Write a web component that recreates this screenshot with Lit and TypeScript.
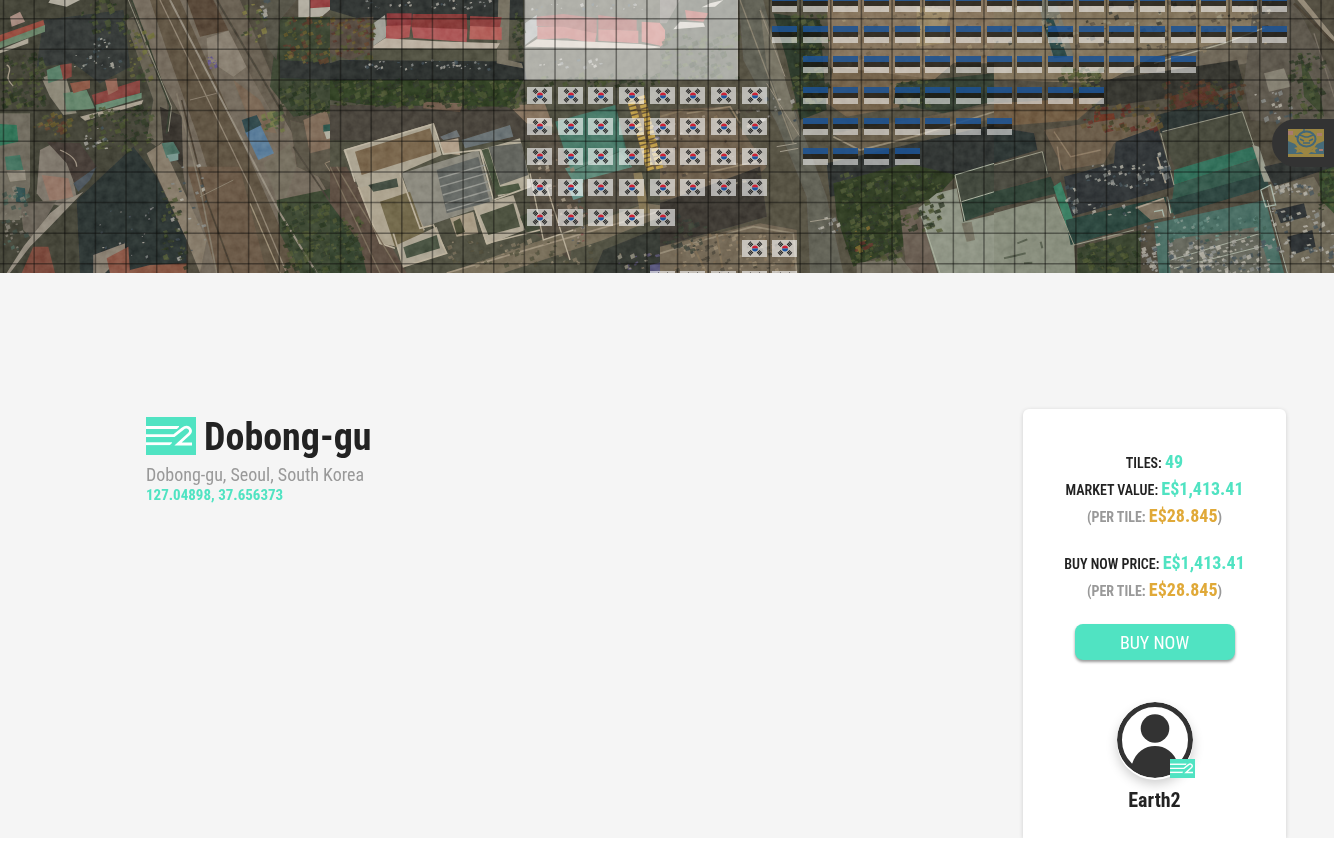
import { LitElement, html, svg, css } from "lit";
import { customElement } from "lit/decorators.js";

type Shape = [string, string];
type Spread = [number, number, number, number, number, number, string];

const STEP = 30.64;
const COLS = Array.from({ length: 44 }, (_, i) => 3.5 + i * STEP);
const ROWS = Array.from({ length: 9 }, (_, i) => 18.7 + i * STEP);

// Each sheet covers 340 units of the map and is drawn on a grid three times finer.
const WEST: Shape[] = [
  ["#453f36", "0,0 1020,0 1020,819 0,819"],
  ["#38382f", "0,0 400,0 500,300 430,819 0,819"],
  ["#292f2f", "130,60 370,30 390,200 300,250 220,190 110,200"],
  ["#5c564a", "375,60 400,50 500,300 510,400 470,440 440,420 460,300"],
  ["#2d2b27", "480,320 550,350 560,520 490,430"],
  ["#695f52", "395,0 640,0 1020,640 1020,819 600,819 550,520 545,350 500,270 440,150"],
  ["#524638", "450,0 540,0 760,500 900,819 720,819 590,400 500,150"],
  ["#5e4d3c", "560,500 720,500 800,819 650,819"],
  ["#7f7568", "620,115 690,90 740,200 700,230 625,180"],
  ["#4c3b2d", "560,0 650,0 690,90 600,110"],
  ["#5b5246", "640,0 720,0 860,330 850,400 760,240"],
  ["#705c4c", "700,240 780,300 830,400 760,390"],
  ["#303a2a", "835,50 1020,50 1020,330 880,350 810,260"],
  ["#262b2c", "840,180 1020,190 1020,240 840,235"],
  ["#4a473e", "780,0 890,0 840,60 830,180 800,140"],
  ["#323d2a", "830,600 1020,560 1020,819 900,819 840,700"],
  ["#6b6355", "790,490 870,430 890,500 860,590 830,600"],
  ["#50483d", "870,360 1020,400 1020,560 890,500"],
  ["#74604f", "910,360 980,330 1010,440 930,460"],
  ["#a8a698", "970,390 1005,388 1010,410 980,418"],
  ["#254d45", "970,375 1010,370 1010,390 970,395"],
  ["#4e7192", "735,395 780,372 822,460 775,480"],
  ["#263d43", "725,360 770,345 785,375 737,398"],
  ["#7b7060", "440,460 485,430 620,720 600,819 560,720"],
  ["#42675c", "485,430 520,425 540,460 500,475"],
  ["#6e8f88", "500,465 535,460 535,480 510,485"],
  ["#24292b", "230,600 400,440 470,530 560,720 560,819 240,819"],
  ["#756d63", "120,450 160,430 210,490 230,590 190,620 130,605 110,580"],
  ["#8a6a5b", "125,525 205,535 220,590 150,605"],
  ["#3b322d", "140,425 240,430 290,500 225,555 200,490"],
  ["#3f4a53", "220,550 290,500 270,540 235,575"],
  ["#656154", "0,340 90,340 90,560 60,660 0,660"],
  ["#27674d", "0,372 50,375 55,425 0,437"],
  ["#376857", "15,470 60,465 70,510 20,510"],
  ["#8b8477", "20,515 75,510 78,540 30,545"],
  ["#264546", "45,560 75,565 78,610 48,605"],
  ["#5f584f", "60,610 170,600 100,720 70,690"],
  ["#8b8377", "150,640 200,600 250,575 140,690 90,740 30,819 20,819 70,740"],
  ["#6f3e32", "100,740 145,740 165,819 65,819"],
  ["#8e3f35", "0,105 130,60 135,80 0,130"],
  ["#5e7a61", "0,125 135,75 135,95 0,145"],
  ["#a39c8d", "0,150 85,115 85,130 0,160"],
  ["#9f8278", "30,50 60,35 75,65 35,80"],
  ["#817b6d", "125,235 190,205 230,340 190,345 150,290"],
  ["#4e755f", "140,210 180,195 190,235 145,250"],
  ["#7b3a35", "180,195 215,190 215,230 190,240"],
  ["#5a7c64", "190,280 260,270 285,325 200,335"],
  ["#7e3735", "275,285 420,240 420,280 285,315"],
  ["#5f826a", "285,315 425,278 425,295 290,335"],
  ["#a19788", "240,350 430,300 425,312 255,362"],
  ["#8e5d50", "315,240 350,235 355,270 325,285"],
  ["#834d3e", "210,250 270,240 270,265 220,280"],
  ["#8b3638", "930,0 1000,0 1000,22 930,25"],
  ["#a9a498", "895,0 930,0 930,25 1000,20 965,50 895,52"],
  ["#7f7468", "280,765 375,730 375,760 315,819 280,819"],
  ["#80493b", "320,775 385,740 390,819 330,819"],
  ["#7b4938", "390,810 450,795 560,790 560,819 390,819"],
  ["#aaa598", "150,0 240,0 200,20 145,8"],
];

const MIDDLE: Shape[] = [
  ["#444438", "0,0 1020,0 1020,819 0,819"],
  ["#26292a", "0,0 580,0 580,60 100,60 0,30"],
  ["#212628", "30,180 580,185 590,240 0,240 0,190"],
  ["#28351f", "0,240 580,240 540,320 230,330 0,300"],
  ["#4c4037", "0,60 130,50 130,150 60,180 0,160"],
  ["#6c6658", "505,0 540,0 535,180 575,190 580,205 500,190"],
  ["#3e3830", "0,315 530,320 640,340 640,420 330,420 0,420"],
  ["#675244", "280,305 400,310 390,335 280,325"],
  ["#7b6855", "535,315 645,312 670,380 590,370"],
  ["#4e443a", "600,400 680,400 745,600 720,780 600,690"],
  ["#514338", "0,500 50,500 230,819 90,819 0,650"],
  ["#2c3828", "0,610 90,730 110,819 0,819"],
  ["#97978f", "130,70 165,45 170,110 130,138"],
  ["#822f30", "170,40 245,40 245,80 170,80"],
  ["#a3484a", "168,78 242,75 238,112 168,122"],
  ["#7d2e2f", "248,42 410,42 412,92 245,85"],
  ["#a54c4e", "245,82 412,88 410,126 250,114"],
  ["#853435", "420,48 515,52 510,82 420,80"],
  ["#ab5350", "420,78 515,82 515,120 418,118"],
  ["#b4a899", "130,138 165,115 320,124 510,130 500,146 130,145"],
  ["#979b98", "585,70 620,45 625,105 585,135"],
  ["#8b3b39", "620,50 700,42 800,55 800,100 690,82 620,78"],
  ["#ad4f4c", "622,80 700,80 800,100 795,130 710,115 622,118"],
  ["#8b3735", "805,45 920,60 920,92 805,88"],
  ["#b05350", "805,88 925,92 925,130 805,122"],
  ["#b65852", "935,65 1010,70 1005,140 935,125"],
  ["#c9bcad", "585,140 620,118 930,132 1000,142 950,146"],
  ["#a39b89", "40,450 310,370 335,465 220,515 210,580 130,600 85,560"],
  ["#6e5a43", "75,455 300,385 320,455 95,525"],
  ["#a99681", "330,425 385,415 390,465 340,460"],
  ["#60666a", "330,410 380,390 390,410 340,420"],
  ["#5d666b", "395,420 540,375 550,410 405,445"],
  ["#817f75", "215,520 445,450 490,610 270,685"],
  ["#595c5a", "320,510 445,470 480,605 350,640"],
  ["#aaa390", "450,450 570,415 605,560 505,590"],
  ["#575952", "475,440 575,430 595,525 510,555"],
  ["#3d4935", "455,450 475,445 510,560 565,550 575,575 500,585"],
  ["#a49a86", "85,565 210,530 285,690 200,740 150,730"],
  ["#665b40", "150,605 240,575 290,720 195,740"],
  ["#384237", "115,555 200,535 205,560 130,575"],
  ["#a59d8c", "200,735 320,680 350,760 220,800"],
  ["#3c4737", "220,742 320,705 330,745 230,775"],
  ["#a1937d", "360,655 430,635 445,700 380,710"],
  ["#40432f", "370,665 390,655 405,695 380,705"],
  ["#a9a08e", "430,620 550,585 585,690 470,735"],
  ["#3f4534", "450,645 550,610 570,680 475,705"],
  ["#363d2f", "570,650 625,625 630,700 590,695"],
  ["#3d6f60", "675,365 855,315 900,500 735,550"],
  ["#517f70", "705,505 870,455 910,505 735,555"],
  ["#5d8c83", "710,550 755,535 760,590 730,600"],
  ["#4e473c", "760,540 910,500 945,610 770,660"],
  ["#6c6250", "750,680 950,610 1020,620 1020,640 820,720 520,819 350,819"],
  ["#2c2d2b", "820,750 1020,670 1020,819 790,819"],
  ["#5e4c31", "890,300 945,285 1000,500 950,515"],
  ["#7f6f50", "910,520 935,515 960,640 930,640"],
  ["#4b4a73", "960,795 1020,780 1020,819 960,819"],
];

const EAST: Shape[] = [
  ["#4a4439", "0,0 1020,0 1020,819 0,819"],
  ["#3c4134", "0,0 230,0 230,240 0,240"],
  ["#655f58", "0,0 60,0 20,70 0,70"],
  ["#a5453f", "75,30 145,40 130,65 80,60"],
  ["#c6c0b5", "60,65 130,68 135,80 40,88"],
  ["#c6c0b5", "150,10 190,0 165,20 125,22"],
  ["#b85b52", "0,70 15,90 15,130 0,140"],
  ["#55544b", "235,0 310,0 370,230 430,400 500,590 550,819 450,819 440,590 350,370 250,180"],
  ["#6c675a", "300,20 340,110 420,400 400,420 320,200"],
  ["#242f22", "340,40 480,60 500,330 420,360 380,180"],
  ["#7c6952", "500,0 1020,0 1020,190 880,190 810,250 600,280 510,200"],
  ["#93805e", "770,20 870,30 850,130 770,140"],
  ["#675641", "520,200 840,240 780,310 560,350 500,310"],
  ["#2c352a", "710,250 800,240 1000,220 1020,300 850,340 700,310"],
  ["#5c5140", "520,400 1020,310 1020,350 590,455"],
  ["#272c2b", "500,490 1020,370 1020,500 890,525 510,590"],
  ["#26331f", "520,550 740,490 890,525 830,590 740,620 730,740 580,800 530,650"],
  ["#625243", "0,330 200,320 320,500 250,570 0,600"],
  ["#302f2c", "0,610 300,500 320,650 0,740"],
  ["#685c4c", "0,740 300,670 410,690 410,819 0,819"],
  ["#5e5248", "720,630 780,620 830,819 740,819"],
  ["#858b7b", "775,625 830,580 890,565 910,665 1020,640 1020,819 835,819"],
  ["#343b32", "885,525 1020,485 1020,585 905,605"],
  ["#26372f", "905,605 1020,570 1020,625 910,665"],
  ["#6d6a5b", "905,670 935,665 945,720 920,725"],
  ["#6b6559", "590,790 720,770 760,819 590,819"],
];

const FAR_EAST: Shape[] = [
  ["#453f36", "0,0 1020,0 1020,819 0,819"],
  ["#796a53", "0,0 860,0 880,90 480,170 330,250 0,240"],
  ["#6e6d61", "130,0 185,0 240,170 180,190"],
  ["#243e3e", "145,60 175,50 220,170 180,175"],
  ["#625a4d", "500,175 820,90 820,180 480,235"],
  ["#2b2a27", "270,250 730,180 750,260 480,300 180,340"],
  ["#4b2c20", "525,290 650,255 680,290 540,335"],
  ["#62291f", "300,345 360,340 370,400 300,395"],
  ["#655039", "0,310 330,290 250,360 0,380"],
  ["#514b43", "780,0 900,0 1020,240 1020,380 770,360 750,250"],
  ["#7a7467", "810,220 870,205 890,260 825,275"],
  ["#897e6d", "910,0 930,0 1020,110 1020,130"],
  ["#615141", "150,390 480,340 500,420 360,430 330,490 210,510"],
  ["#24292a", "0,380 120,400 130,450 0,490"],
  ["#3d3e35", "0,495 150,455 165,525 0,575"],
  ["#26372e", "0,575 170,530 190,580 0,625"],
  ["#252b2e", "365,425 490,380 540,560 230,650 210,530 360,490"],
  ["#24292a", "490,345 720,280 745,335 500,400"],
  ["#3b3d33", "500,400 745,335 780,435 545,510"],
  ["#28644f", "540,510 775,440 790,475 540,555"],
  ["#2b4d42", "540,555 790,475 815,550 530,640"],
  ["#203834", "525,600 815,520 825,560 540,645"],
  ["#8b8e80", "775,435 795,440 830,545 810,545"],
  ["#7d8373", "0,640 180,590 240,735 245,819 0,819"],
  ["#2f7359", "178,560 200,545 245,680 230,720"],
  ["#203a34", "215,660 515,590 520,650 230,735"],
  ["#716656", "425,620 510,595 530,650 470,660"],
  ["#3d625a", "480,670 815,600 870,819 495,819"],
  ["#5a5c52", "520,720 790,680 830,819 530,819"],
  ["#746a5b", "325,710 385,700 395,745 335,755"],
  ["#2d3827", "250,745 440,690 440,819 250,819"],
  ["#625b4e", "820,560 960,530 1020,640 1020,819 880,819"],
  ["#242829", "845,630 930,610 940,650 860,670"],
  ["#242829", "880,710 955,690 965,740 895,765"],
  ["#2f4226", "975,510 1020,500 1020,640 980,600"],
  ["#303c28", "920,170 980,290 990,350 930,290"],
  ["#26292a", "810,500 1020,450 1020,500 840,560"],
];

// x, y, width, height, count, size, colours
const LEAVES = "#1f2a19 #3d4829 #454e2c #252e20";
const AUTUMN = "#593a26 #625427 #4d2a22 #454b29";
const CARS = "#a09f98 #7d817f #394750 #b2aea3";
const SPREADS: Spread[][] = [
  [
    [0, 160, 125, 160, 100, 11, LEAVES], [100, 340, 110, 80, 44, 10, AUTUMN],
    [260, 320, 190, 130, 90, 11, LEAVES], [240, 0, 140, 100, 40, 11, LEAVES],
    [380, 90, 70, 160, 40, 9, "#58572f #65662f #34412a"], [840, 50, 180, 140, 90, 10, AUTUMN],
    [835, 240, 185, 100, 90, 12, LEAVES], [840, 610, 180, 209, 150, 12, LEAVES],
    [720, 0, 80, 130, 26, 10, "#79743a #4b5530 #2c3623"], [780, 330, 60, 60, 30, 10, "#68713b #405232"],
    [275, 110, 50, 45, 14, 6, CARS], [220, 165, 145, 40, 22, 6, CARS],
    [250, 380, 70, 75, 14, 8, CARS], [270, 620, 190, 170, 20, 5, CARS],
    [510, 480, 110, 300, 22, 8, CARS], [0, 550, 75, 220, 45, 9, "#7a756a #405a50 #34453f"],
    [620, 170, 30, 35, 12, 7, "#4c4086 #65548d"], [480, 560, 75, 250, 40, 10, LEAVES],
    [775, 0, 22, 50, 8, 10, CARS],
  ],
  [
    [0, 240, 580, 80, 220, 12, LEAVES], [0, 55, 125, 120, 80, 10, AUTUMN],
    [100, 0, 400, 25, 32, 6, CARS], [100, 180, 380, 28, 45, 6, CARS],
    [600, 10, 400, 18, 22, 6, CARS], [585, 175, 240, 25, 14, 7, CARS],
    [540, 40, 30, 140, 30, 10, LEAVES], [0, 650, 90, 160, 65, 10, LEAVES],
    [350, 720, 430, 75, 70, 9, "#716652 #8d7f68 #454431"], [710, 600, 60, 130, 22, 8, "#9b8b7c #713e3b #494e52"],
    [960, 370, 60, 110, 28, 9, "#8b849a #bbb1a2 #5c5677"], [850, 760, 150, 50, 22, 9, "#766b58 #534e71 #8b8778"],
    [620, 470, 100, 210, 30, 8, "#887764 #a49885 #41352d"], [600, 220, 420, 40, 65, 10, LEAVES],
  ],
  [
    [0, 100, 230, 135, 120, 11, LEAVES], [390, 40, 100, 290, 130, 12, LEAVES],
    [540, 520, 300, 170, 200, 12, LEAVES], [550, 690, 160, 100, 90, 12, LEAVES],
    [0, 320, 290, 250, 50, 8, "#7e6b53 #413a31 #938570"], [40, 700, 360, 110, 100, 8, "#75644d #8e7e67 #3e3b31"],
    [530, 0, 490, 200, 110, 9, "#82705b #625442 #958367"], [690, 240, 120, 80, 50, 10, LEAVES],
    [240, 290, 160, 80, 16, 8, CARS], [470, 650, 60, 50, 10, 8, CARS],
    [580, 680, 60, 100, 20, 10, "#796025 #592823 #3b4326"], [0, 640, 130, 120, 34, 10, "#292f2c #35392e"],
  ],
  [
    [0, 0, 840, 150, 150, 10, "#7b6b54 #4e4438 #918872 #302f2b"], [190, 200, 130, 70, 60, 12, "#414b2a #4c532a #29311f"],
    [500, 240, 240, 85, 100, 11, "#542b20 #47301f #323624"], [250, 310, 240, 80, 80, 11, "#5c2720 #594928 #36361f"],
    [880, 160, 100, 190, 70, 11, LEAVES], [210, 540, 30, 95, 14, 9, CARS],
    [270, 490, 200, 70, 45, 8, CARS], [270, 610, 130, 35, 14, 7, CARS],
    [485, 450, 28, 80, 10, 11, CARS], [430, 675, 60, 140, 36, 9, CARS],
    [520, 720, 300, 99, 150, 9, CARS], [830, 550, 130, 40, 32, 9, CARS],
    [830, 620, 150, 160, 50, 9, CARS], [775, 275, 110, 90, 18, 9, CARS],
    [250, 730, 190, 80, 60, 11, LEAVES], [970, 510, 50, 120, 40, 12, LEAVES],
    [520, 650, 290, 70, 50, 8, "#587f77 #2e5149 #799087"], [990, 690, 30, 110, 12, 9, CARS],
  ],
];

const STROKES: [string, number, string][][] = [
  [
    ["#8b8274", 6, "M510 0L840 640L950 819"], ["#857867", 4, "M480 0L750 560L860 819"],
    ["#2c3227", 5, "M395 0L440 120L510 320L500 400"], ["#868373", 3, "M385 0L430 110L515 320L505 395"],
    ["#796f61", 5, "M530 280L600 560L650 819"], ["#3f362c", 5, "M545 300L620 600L700 819"],
    ["#413a30", 6, "M650 0L860 360"], ["#807362", 3, "M570 300L650 280M600 590L700 540"],
    ["#413a32", 5, "M880 440L1020 650"], ["#847763", 3, "M1020 470L975 490L1020 560"],
    ["#9d927f", 4, "M20 195Q35 200 25 225Q20 240 40 258"], ["#94866f", 4, "M750 610L840 819"],
    ["#96897b", 4, "M180 450Q230 470 230 500"],
  ],
  [
    ["#b7ae9b", 5, "M75 545L45 450L310 372L340 462L450 450L490 600L600 560"],
    ["#8b8d88", 4, "M325 535L465 495M330 560L470 520M338 585L475 545M345 610L480 570M350 632L485 592"],
    ["#b4a994", 5, "M85 560L150 730L195 745M210 520L270 685L310 675L350 760L220 800L190 700M435 625L470 730L630 690"],
    ["#968873", 5, "M350 819L1020 625"], ["#726453", 4, "M0 500L150 819M20 500L210 819"],
    ["#365e50", 3, "M855 315L900 500M735 510L880 450"],
    ["#b0a590", 4, "M600 520L640 720L730 690M650 560L720 780"],
  ],
  [
    ["#7f7867", 4, "M240 0L400 430"], ["#8d8473", 3, "M300 30L375 230M320 250L420 410"],
    ["#8a7e6a", 5, "M0 760L130 720L280 680L400 700L410 819"], ["#88775f", 5, "M80 340L210 320L240 370M130 520L310 480"],
    ["#8c806b", 5, "M520 410L600 450L760 410L1020 330"], ["#a3aa98", 3, "M885 525L1020 485M785 650L840 819M905 605L1020 570M885 525L915 665"],
    ["#948e7e", 3, "M350 440L410 430M360 455L415 445M450 665L515 655"],
    ["#77664f", 6, "M90 720L140 819M170 700L190 819M0 350L70 330"],
  ],
  [
    ["#a29e8c", 4, "M480 190L690 130L820 80"], ["#3d342b", 8, "M900 10L1020 130"],
    ["#90917f", 3, "M505 395L745 335L815 540M500 400L540 555M0 495L145 455L160 520M180 590L240 735L420 690"],
    ["#84715b", 4, "M180 395L230 470L320 450M200 510L190 440"],
    ["#9eada0", 4, "M800 570L830 555L845 615L815 620ZM480 635L505 630L510 650M520 590L530 640"],
    ["#9da497", 3, "M530 780L800 700M540 805L820 735M820 600L880 819"],
    ["#a49886", 5, "M425 625L510 595M490 470L515 550"], ["#6a6257", 4, "M960 100L1020 290"],
    ["#4c5344", 6, "M70 730L100 718M30 775L95 760M90 790L115 788M140 725L145 745"],
  ],
];

const random = (seed: number) => () => {
  seed = (seed * 16807) % 2147483647;
  return seed / 2147483647;
};

const scatter = ([x, y, w, h, count, size, tones]: Spread, n: number) => {
  const next = random(n * 7919 + 31);
  const colours = tones.split(" ");
  const paths = colours.map(() => "");
  for (let i = 0; i < count; i++) {
    const px = x + next() * w;
    const py = y + next() * h;
    const s = size * (0.5 + next());
    const t = s * (0.4 + next() * 0.7);
    paths[Math.floor(next() * colours.length)] +=
      `M${px.toFixed(0)} ${py.toFixed(0)}l${s.toFixed(0)} ${(-t / 2).toFixed(0)}l${(s / 3).toFixed(0)} ${t.toFixed(0)}l${(-s).toFixed(0)} ${(t / 2).toFixed(0)}z`;
  }
  return paths.map((d, i) => svg`<path d=${d} fill=${colours[i]} opacity="0.8"/>`);
};

const sheet = (x: number, shapes: Shape[], index: number) => svg`
  <svg x=${x} y="0" width="340" height="273" viewBox="0 0 1020 819">
    ${shapes.map(([fill, points]) => svg`<polygon fill=${fill} points=${points}/>`)}
    ${STROKES[index].map(([c, w, d]) => svg`<path d=${d} stroke=${c} stroke-width=${w} fill="none"/>`)}
    ${SPREADS[index].map((s, i) => scatter(s, index * 40 + i + 1))}
  </svg>`;

const KOREAN: [number, number, number][] = [
  [17, 2, 8], [17, 3, 8], [17, 4, 8], [17, 5, 8], [17, 6, 5], [24, 7, 2], [21, 8, 5],
];
const ESTONIAN: [number, number, number][] = [
  [25, -1, 17], [25, 0, 17], [26, 1, 13], [26, 2, 10], [26, 3, 7], [26, 4, 4],
];

const flags = (rows: [number, number, number][], id: string) =>
  rows.map(([col, row, count]) =>
    Array.from({ length: count }, (_, i) =>
      svg`<use href=${"#" + id} x=${Math.round(6.2 + (col + i) * STEP)} y=${Math.round(25.6 + row * STEP)}/>`));

const brand = html`
  <svg class="brand" viewBox="0 0 50 38" role="img" aria-label="Earth2">
    <path fill="#50e3c2" d="M0 0h50v38H0z"/>
    <g fill="none" stroke="#fff" stroke-width="2.800">
      <path d="M0 10.500H33"/><path d="M0 18.700H28L36.500 11.800Q40 9 43 11Q46 14 43 17L32 27H46"/><path d="M0 26.700H26"/>
    </g>
    <path d="M31 13L35 9M24 29L30 23" stroke="#50e3c2" stroke-width="1.500"/>
  </svg>`;

@customElement("satellite-map")
export class SatelliteMap extends LitElement {
  static styles = css`
    :host { display: block; position: relative; overflow: hidden; }
    .map { display: block; width: 100%; height: 273px; }
    .grain { mix-blend-mode: soft-light; }
    .shortcut {
      position: absolute; right: 0; top: 119px; width: 62px; height: 48px;
      padding: 0 0 0 16px; border: 0; border-radius: 24px 0 0 24px;
      background: #333; display: flex; align-items: center; cursor: pointer;
    }
    .thumb { width: 36px; height: 28px; }
  `;

  render() {
    return html`
      <svg class="map" viewBox="0 0 1334 273" preserveAspectRatio="xMidYMid slice" role="img" aria-label="Satellite map of Dobong-gu">
        <defs>
          <filter id="soft" x="0" y="0" width="100%" height="100%"><feGaussianBlur stdDeviation="0.7"/></filter>
          <filter id="grain" x="0" y="0" width="100%" height="100%">
            <feTurbulence type="fractalNoise" baseFrequency="0.13" numOctaves="3" seed="8"/>
            <feColorMatrix values="0.7 0 0 0 0.14  0.7 0 0 0 0.14  0.6 0 0 0 0.14  0 0 0 0 1"/>
          </filter>
          <path id="bars" d="M-2 -1.500h4M-2 0h4M-2 1.500h4" stroke="#1c1c1c" stroke-width="1"/>
          <g id="kr">
            <path fill="#fff" fill-opacity="0.6" d="M0 0h25v17H0z"/>
            <path fill="#cd2034" d="M10 8.500a3 3 0 0 1 6 0z"/>
            <path fill="#1c56a0" d="M10 8.500a3 3 0 0 0 6 0z"/>
            <use href="#bars" transform="translate(8.500 4.200) rotate(-45)"/>
            <use href="#bars" transform="translate(17.500 12.800) rotate(-45)"/>
            <use href="#bars" transform="translate(17.500 4.200) rotate(45)"/>
            <use href="#bars" transform="translate(8.500 12.800) rotate(45)"/>
          </g>
          <g id="ee">
            <path fill="#1b5293" fill-opacity="0.86" d="M0 0h25v6H0z"/>
            <path fill="#15130f" fill-opacity="0.72" d="M0 6h25v5H0z"/>
            <path fill="#fff" fill-opacity="0.54" d="M0 11h25v6H0z"/>
          </g>
        </defs>
        <path fill="#453f36" d="M0 0h1334v273H0z"/>
        <g filter="url(#soft)">
          ${sheet(0, WEST, 0)}${sheet(330, MIDDLE, 1)}${sheet(660, EAST, 2)}${sheet(994, FAR_EAST, 3)}
          <g stroke="#ba9640" stroke-width="7" stroke-dasharray="3 1.500"><path d="M630 98L651 171M641 96L660 169"/></g>
        </g>
        <rect class="grain" width="1334" height="273" filter="url(#grain)" opacity="0.5"/>
        <path d="M524 0h214v80H524z" fill="#fff" fill-opacity="0.54"/>
        <g stroke="#0b0b09" stroke-opacity="0.44" stroke-width="1.500">
          ${COLS.map((x) => svg`<path d=${`M${x} 0V273`}/>`)}
          ${ROWS.map((y) => svg`<path d=${`M0 ${y}H1334`}/>`)}
        </g>
        ${flags(KOREAN, "kr")}${flags(ESTONIAN, "ee")}
      </svg>
      <button class="shortcut" aria-label="Open featured property">
        <svg class="thumb" viewBox="0 0 36 28" aria-hidden="true">
          <path fill="#9b8643" d="M0 0h36v28H0z"/>
          <path fill="#476b79" d="M0 12l7 3 4 5 7 5 7-5 4-5 7-3v13H0z"/>
          <path fill="#9b8643" d="M6 19l4-1 2 3 6 1 6-1 2-3 4 1-3 2 1 3-5-1-5 4-5-4-5 1 1-3z"/>
          <path fill="#a87b70" d="M0 2h5v4H0zM29 4h5v3h-5zM31 20h4v2h-4z"/>
          <ellipse cx="18.500" cy="10" rx="9" ry="7.500" fill="#9b8643" stroke="#426779" stroke-width="2"/>
          <path d="M12 6l5 2h3l5-2M12 10l4 2M25 10l-4 2M15 14h7M16 0v4M7 7l4 2" fill="none" stroke="#426779" stroke-width="1.500"/>
        </svg>
      </button>`;
  }
}

@customElement("app-root")
export class AppRoot extends LitElement {
  static styles = css`
    :host {
      display: flex; flex-direction: column; height: calc(100vh - 10px); overflow: hidden;
      font-family: "Roboto Condensed", Roboto, "Liberation Sans", sans-serif;
      background: #f5f5f5; color: #222;
    }
    satellite-map { flex: none; }
    .content {
      flex: 1; min-height: 0; display: flex; justify-content: space-between;
      padding: 136px 48px 0 146px;
    }
    .place { padding-top: 8px; }
    .heading { display: flex; align-items: flex-start; gap: 8px; height: 38px; }
    .brand { display: block; width: 50px; height: 38px; flex: none; }
    h1 { margin: 0; font-size: 38px; line-height: 40px; font-weight: 700; }
    .region { margin: 10px 0 0; font-size: 18px; line-height: 20px; color: #999; }
    .coords { display: block; font-size: 15px; line-height: 20px; font-weight: 700; color: #50e3c2; text-decoration: none; }
    .card {
      box-sizing: border-box; width: 263px; flex: none; padding: 41px 16px 0;
      background: #fff; border-radius: 6px 6px 0 0; box-shadow: 0 1px 4px rgba(0, 0, 0, 0.16);
      display: flex; flex-direction: column; align-items: center; text-align: center;
    }
    .facts { margin: 0; }
    .facts + .facts { margin: 20px 0 19px; }
    .facts p { margin: 0; font-size: 14px; line-height: 27px; font-weight: 600; white-space: nowrap; }
    .facts b { font-size: 18px; line-height: 20px; font-weight: 700; color: #50e3c2; }
    .facts .per { color: #999; font-weight: 700; }
    .facts .per b { color: #e0a938; }
    .buy {
      width: 160px; height: 36px; border: 0; border-radius: 8px; padding: 0;
      background: #50e3c2; color: #fff; font: inherit; font-size: 18px; cursor: pointer;
      box-shadow: 0 2px 3px rgba(0, 0, 0, 0.4);
    }
    .owner { margin-top: 42px; color: inherit; text-decoration: none; font-size: 20px; line-height: 24px; font-weight: 700; }
    .avatar { display: block; position: relative; width: 76px; margin: 0 auto 10px; }
    .person { display: block; width: 76px; height: 76px; border-radius: 50%; box-shadow: 0 2px 0 #fff, 0 6px 12px rgba(0, 0, 0, 0.2); }
    .avatar .brand { position: absolute; right: -2px; bottom: 0; width: 25px; height: 19px; }
  `;

  render() {
    return html`
      <satellite-map></satellite-map>
      <main class="content">
        <section class="place">
          <div class="heading">${brand}<h1>Dobong-gu</h1></div>
          <p class="region">Dobong-gu, Seoul, South Korea</p>
          <a class="coords" href="#map">127.04898, 37.656373</a>
        </section>
        <aside class="card">
          <div class="facts">
            <p>TILES: <b>49</b></p>
            <p>MARKET VALUE: <b>E$1,413.41</b></p>
            <p class="per">(PER TILE: <b>E$28.845</b>)</p>
          </div>
          <div class="facts">
            <p>BUY NOW PRICE: <b>E$1,413.41</b></p>
            <p class="per">(PER TILE: <b>E$28.845</b>)</p>
          </div>
          <button class="buy">BUY NOW</button>
          <a class="owner" href="#owner">
            <span class="avatar">
              <svg class="person" viewBox="0 0 76 76" aria-hidden="true">
                <clipPath id="disc"><circle cx="38" cy="38" r="37"/></clipPath>
                <circle cx="38" cy="38" r="35.500" fill="#fff" stroke="#333" stroke-width="5"/>
                <circle cx="38" cy="26.500" r="14.300" fill="#333"/>
                <path clip-path="url(#disc)" fill="#333" d="M14 66C17 51 27 44 38 44s21 7 24 22L52 76H24z"/>
              </svg>
              ${brand}
            </span>
            Earth2
          </a>
        </aside>
      </main>`;
  }
}
